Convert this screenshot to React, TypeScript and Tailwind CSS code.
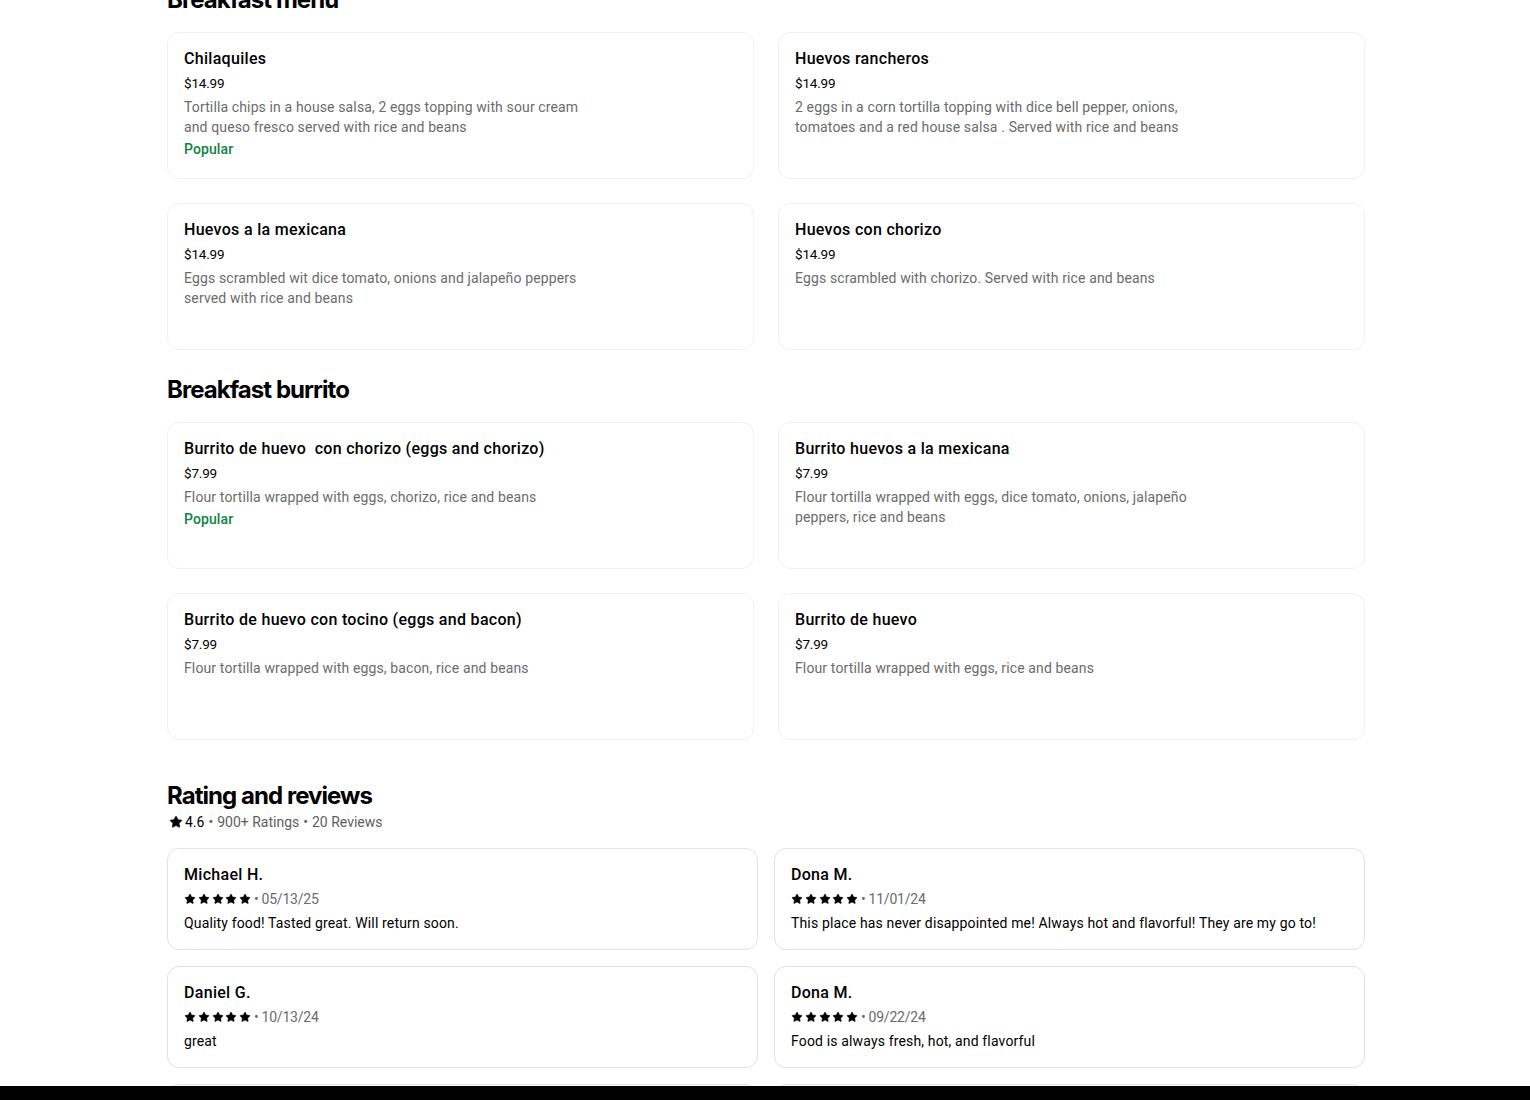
import { Star } from 'lucide-react';

type MenuItem = {
  name: string;
  price: string;
  desc: string;
  popular?: boolean;
};

type Review = {
  name: string;
  date: string;
  text: string;
};

const sections: { title: string; items: MenuItem[] }[] = [
  {
    title: 'Breakfast menu',
    items: [
      {
        name: 'Chilaquiles',
        price: '$14.99',
        desc: 'Tortilla chips in a house salsa, 2 eggs topping with sour cream and queso fresco served with rice and beans',
        popular: true,
      },
      {
        name: 'Huevos rancheros',
        price: '$14.99',
        desc: '2 eggs in a corn tortilla topping with dice bell pepper, onions, tomatoes and a red house salsa . Served with rice and beans',
      },
      {
        name: 'Huevos a la mexicana',
        price: '$14.99',
        desc: 'Eggs scrambled wit dice tomato, onions and jalapeño peppers served with rice and beans',
      },
      {
        name: 'Huevos con chorizo',
        price: '$14.99',
        desc: 'Eggs scrambled with chorizo. Served with rice and beans',
      },
    ],
  },
  {
    title: 'Breakfast burrito',
    items: [
      {
        name: 'Burrito de huevo  con chorizo (eggs and chorizo)',
        price: '$7.99',
        desc: 'Flour tortilla wrapped with eggs, chorizo, rice and beans',
        popular: true,
      },
      {
        name: 'Burrito huevos a la mexicana',
        price: '$7.99',
        desc: 'Flour tortilla wrapped with eggs, dice tomato, onions, jalapeño peppers, rice and beans',
      },
      {
        name: 'Burrito de huevo con tocino (eggs and bacon)',
        price: '$7.99',
        desc: 'Flour tortilla wrapped with eggs, bacon, rice and beans',
      },
      {
        name: 'Burrito de huevo',
        price: '$7.99',
        desc: 'Flour tortilla wrapped with eggs, rice and beans',
      },
    ],
  },
];

const reviews: Review[] = [
  { name: 'Michael H.', date: '05/13/25', text: 'Quality food! Tasted great. Will return soon.' },
  { name: 'Dona M.', date: '11/01/24', text: 'This place has never disappointed me! Always hot and flavorful! They are my go to!' },
  { name: 'Daniel G.', date: '10/13/24', text: 'great' },
  { name: 'Dona M.', date: '09/22/24', text: 'Food is always fresh, hot, and flavorful' },
  { name: 'Maria L.', date: '08/30/24', text: 'Delicious and fast.' },
  { name: 'Jose R.', date: '08/02/24', text: 'Best breakfast burritos around.' },
];

const body = { fontFamily: 'Roboto, "Liberation Sans", sans-serif' };
const heading = { fontFamily: 'Inter, "Liberation Sans", sans-serif' };

function MenuCard({ item }: { item: MenuItem }) {
  return (
    <div className="h-[147px] rounded-xl border border-[#f1f1f1] bg-white px-4 pt-4">
      <p className="whitespace-pre text-[16px] leading-5 font-medium tracking-[0.3px] text-black">
        {item.name}
      </p>
      <p className="mt-1 text-[13.5px] leading-5 tracking-[-0.2px] text-black">{item.price}</p>
      <p className="mt-1 max-w-[412px] text-[14px] leading-5 tracking-[0.13px] text-[#6b6b6b]">
        {item.desc}
      </p>
      {item.popular && (
        <p className="mt-[2px] text-[14px] leading-5 font-medium tracking-[0.1px] text-[#0e8345]">
          Popular
        </p>
      )}
    </div>
  );
}

function ReviewCard({ review }: { review: Review }) {
  return (
    <div className="h-[102px] rounded-xl border border-[#e2e2e2] bg-white px-4 pt-4">
      <p className="text-[16px] leading-5 font-medium tracking-[0.3px] text-black">{review.name}</p>
      <div className="mt-1 flex h-5 items-center text-[14px] tracking-[-0.2px] text-[#6b6b6b]">
        <div className="flex gap-[1.75px]">
          {[0, 1, 2, 3, 4].map((i) => (
            <Star key={i} className="size-3 fill-black text-black" strokeWidth={1} />
          ))}
        </div>
        <span className="mx-[3px]">•</span>
        <span>{review.date}</span>
      </div>
      <p className="mt-1 text-[14px] leading-5 tracking-[0.15px] text-black">{review.text}</p>
    </div>
  );
}

export default function App() {
  return (
    <div className="min-h-screen bg-white" style={body}>
      <div className="ml-[167px] w-[1198px] -mt-4 pb-10">
        {sections.map((section, idx) => (
          <section key={section.title} className={idx === 0 ? '' : 'mt-6'}>
            <h2
              className="mb-4 h-8 text-[24px] leading-8 font-bold tracking-[-0.95px] text-black"
              style={heading}
            >
              {section.title}
            </h2>
            <div className="grid grid-cols-2 gap-6">
              {section.items.map((item) => (
                <MenuCard key={item.name} item={item} />
              ))}
            </div>
          </section>
        ))}

        {/* Reviews */}
        <section className="mt-10">
          <h2
            className="h-8 text-[24px] leading-8 font-bold tracking-[-0.95px] text-black"
            style={heading}
          >
            Rating and reviews
          </h2>
          <div className="flex h-5 items-center text-[14px] tracking-[0px] text-[#5e5e5e]">
            <Star className="ml-[2px] mr-[2px] size-[14px] fill-black text-black" strokeWidth={1} />
            <span className="text-black">4.6</span>
            <span className="mx-1">•</span>
            <span>900+ Ratings</span>
            <span className="mx-1">•</span>
            <span>20 Reviews</span>
          </div>
          <div className="mt-4 grid grid-cols-2 gap-4">
            {reviews.map((r, i) => (
              <ReviewCard key={i} review={r} />
            ))}
          </div>
        </section>
      </div>

      {/* bottom bar */}
      <div className="fixed inset-x-0 bottom-0 h-[14px] bg-black" />
    </div>
  );
}
